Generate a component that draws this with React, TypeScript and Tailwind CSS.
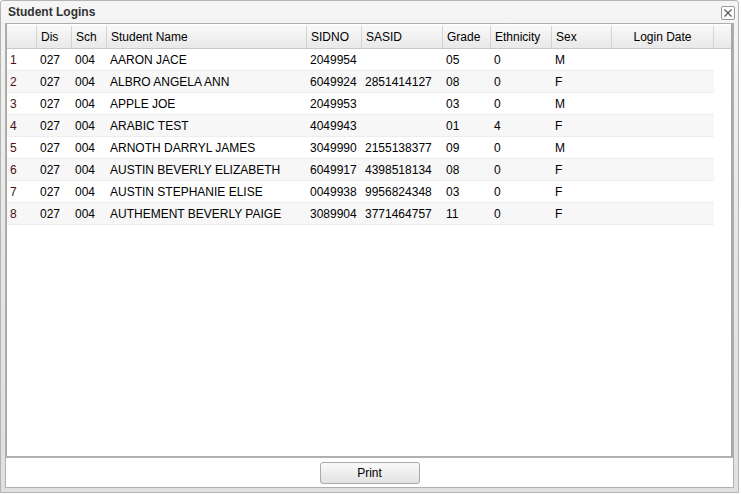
import React from 'react';

type Student = {
  dis: string;
  sch: string;
  name: string;
  sidno: string;
  sasid: string;
  grade: string;
  ethnicity: string;
  sex: string;
  loginDate: string;
};

const students: Student[] = [
  { dis: '027', sch: '004', name: 'AARON JACE', sidno: '2049954', sasid: '', grade: '05', ethnicity: '0', sex: 'M', loginDate: '' },
  { dis: '027', sch: '004', name: 'ALBRO ANGELA ANN', sidno: '6049924', sasid: '2851414127', grade: '08', ethnicity: '0', sex: 'F', loginDate: '' },
  { dis: '027', sch: '004', name: 'APPLE JOE', sidno: '2049953', sasid: '', grade: '03', ethnicity: '0', sex: 'M', loginDate: '' },
  { dis: '027', sch: '004', name: 'ARABIC TEST', sidno: '4049943', sasid: '', grade: '01', ethnicity: '4', sex: 'F', loginDate: '' },
  { dis: '027', sch: '004', name: 'ARNOTH DARRYL JAMES', sidno: '3049990', sasid: '2155138377', grade: '09', ethnicity: '0', sex: 'M', loginDate: '' },
  { dis: '027', sch: '004', name: 'AUSTIN BEVERLY ELIZABETH', sidno: '6049917', sasid: '4398518134', grade: '08', ethnicity: '0', sex: 'F', loginDate: '' },
  { dis: '027', sch: '004', name: 'AUSTIN STEPHANIE ELISE', sidno: '0049938', sasid: '9956824348', grade: '03', ethnicity: '0', sex: 'F', loginDate: '' },
  { dis: '027', sch: '004', name: 'AUTHEMENT BEVERLY PAIGE', sidno: '3089904', sasid: '3771464757', grade: '11', ethnicity: '0', sex: 'F', loginDate: '' },
];

const columns: { key: keyof Student; label: string; width: string; center?: boolean }[] = [
  { key: 'dis', label: 'Dis', width: 'w-[35px]' },
  { key: 'sch', label: 'Sch', width: 'w-[35px]' },
  { key: 'name', label: 'Student Name', width: 'w-[200px]' },
  { key: 'sidno', label: 'SIDNO', width: 'w-[55px]' },
  { key: 'sasid', label: 'SASID', width: 'w-[81px]' },
  { key: 'grade', label: 'Grade', width: 'w-[48px]' },
  { key: 'ethnicity', label: 'Ethnicity', width: 'w-[61px]' },
  { key: 'sex', label: 'Sex', width: 'w-[60px]' },
  { key: 'loginDate', label: 'Login Date', width: 'w-[102px]', center: true },
];

export default function App() {
  return (
    <div className="w-[741px] h-[495px] bg-white text-[12px] text-black" style={{ fontFamily: '"Liberation Sans", Arial, sans-serif' }}>
      <div className="w-[739px] h-[493px] flex flex-col border border-[#b4b4b4] rounded-t-[3px] bg-gradient-to-b from-[#f5f5f5] via-[#e6e6e6] to-[#e0e0e0]">
        {/* title bar */}
        <div className="h-[22px] flex items-center justify-between pl-[7px] pr-[3px] shrink-0">
          <span className="font-bold text-[#333333]">Student Logins</span>
          <button className="w-[14px] h-[14px] flex items-center justify-center border border-[#9a9a9a] rounded-[2px] bg-[#fafafa] mt-[1px]">
            <svg width="10" height="10" viewBox="0 0 10 10">
              <path d="M1.5 1.5 L8.5 8.5 M8.5 1.5 L1.5 8.5" stroke="#555" strokeWidth="1.1" />
            </svg>
          </button>
        </div>

        {/* content */}
        <div className="flex-1 mx-[4px] mb-[4px] flex flex-col border border-[#b0b0b0] bg-white">
          <div className="flex-1 flex flex-col border-l border-r-2 border-[#a8a8a8] pt-[1px]">
            {/* header */}
            <div className="flex h-[24px] pt-[1px] border-b border-[#c8c8c8] bg-gradient-to-b from-[#f9f9f9] to-[#e9e9e9]">
              <div className="w-[30px] border-r border-[#d4d4d4]" />
              {columns.map(c => (
                <div
                  key={c.key}
                  className={`${c.width} flex items-center border-r border-[#d4d4d4] ${c.center ? 'justify-center' : 'pl-[4px]'}`}
                >
                  {c.label}
                </div>
              ))}
              <div className="flex-1" />
            </div>
            {/* rows */}
            {students.map((s, i) => (
              <div
                key={i}
                className={`flex h-[22px] w-[707px] border-b border-[#ededed] ${i % 2 === 1 ? 'bg-[#f7f7f7]' : 'bg-white'}`}
              >
                <div className="w-[30px] flex items-center pl-[3px] text-[#4a1010]">{i + 1}</div>
                {columns.map(c => (
                  <div key={c.key} className={`${c.width} flex items-center pl-[3px] whitespace-nowrap`}>
                    {s[c.key]}
                  </div>
                ))}
              </div>
            ))}
          </div>

          {/* footer */}
          <div className="h-[31px] shrink-0 border-t-2 border-[#b0b0b0] flex items-center justify-center">
            <button className="w-[100px] h-[22px] rounded-[3px] border border-[#aaaaaa] bg-gradient-to-b from-[#fafafa] to-[#e2e2e2] text-[12px] text-black">
              Print
            </button>
          </div>
        </div>
      </div>
    </div>
  );
}
